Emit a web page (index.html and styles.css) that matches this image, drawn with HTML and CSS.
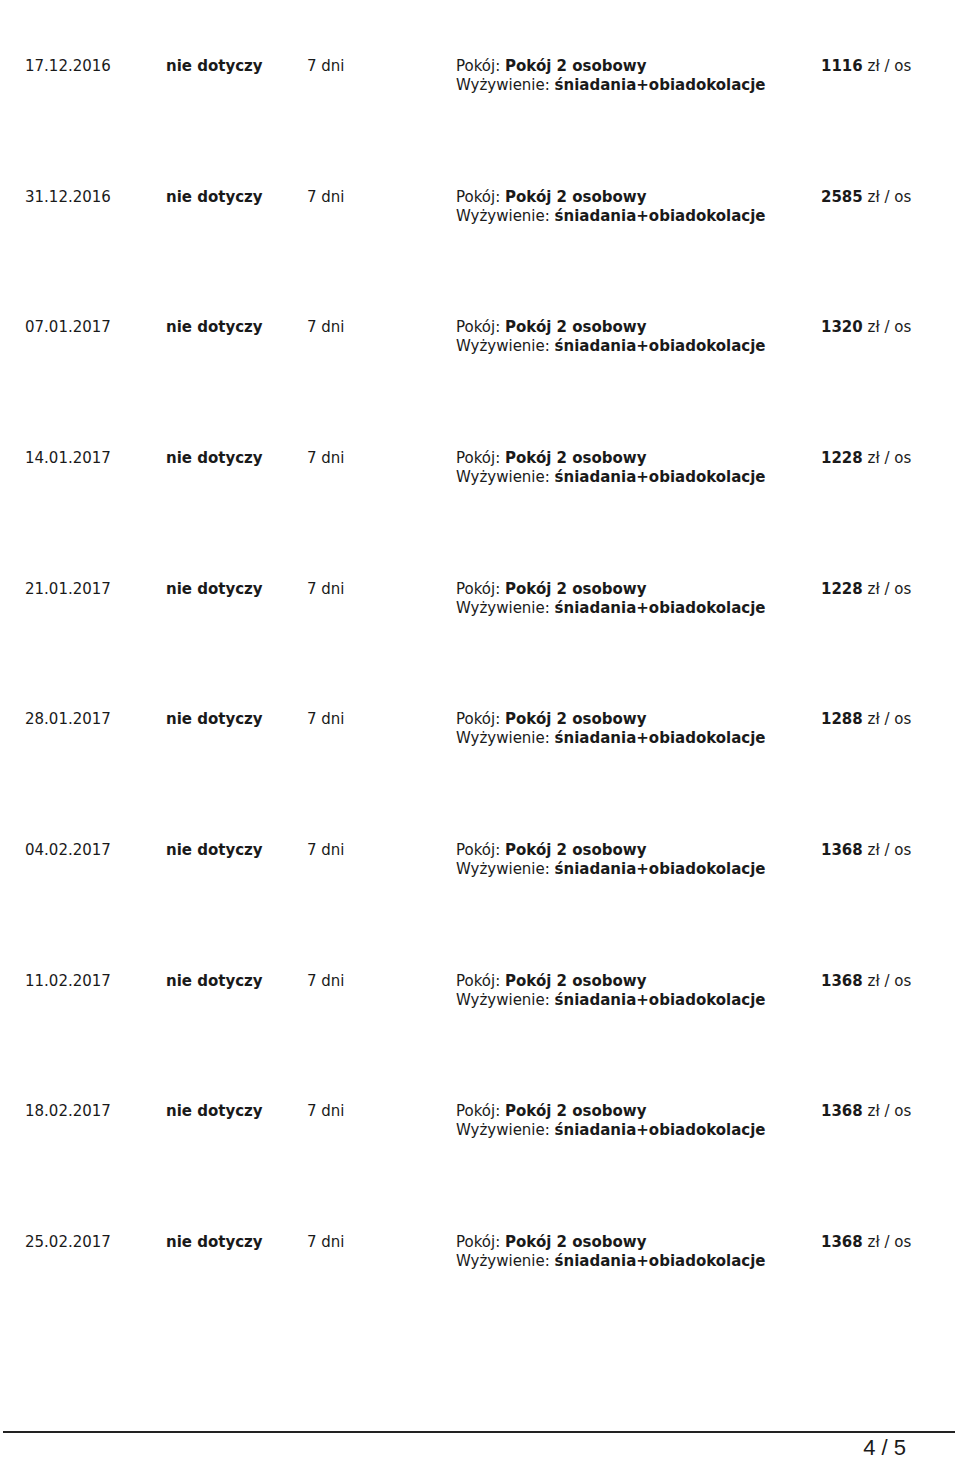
FILE: index.html
```html
<!DOCTYPE html>
<html lang="pl">
<head>
<meta charset="utf-8">
<title>Terminy</title>
<link rel="stylesheet" href="styles.css">
</head>
<body>
<div class="page">
  <div class="rows">
    <div class="row"><div>17.12.2016</div><div class="b">nie dotyczy</div><div>7 dni</div><div>Pokój: <b>Pokój 2 osobowy</b><br>Wyżywienie: <b>śniadania+obiadokolacje</b></div><div><b>1116</b> zł / os</div></div>
    <div class="row"><div>31.12.2016</div><div class="b">nie dotyczy</div><div>7 dni</div><div>Pokój: <b>Pokój 2 osobowy</b><br>Wyżywienie: <b>śniadania+obiadokolacje</b></div><div><b>2585</b> zł / os</div></div>
    <div class="row"><div>07.01.2017</div><div class="b">nie dotyczy</div><div>7 dni</div><div>Pokój: <b>Pokój 2 osobowy</b><br>Wyżywienie: <b>śniadania+obiadokolacje</b></div><div><b>1320</b> zł / os</div></div>
    <div class="row"><div>14.01.2017</div><div class="b">nie dotyczy</div><div>7 dni</div><div>Pokój: <b>Pokój 2 osobowy</b><br>Wyżywienie: <b>śniadania+obiadokolacje</b></div><div><b>1228</b> zł / os</div></div>
    <div class="row"><div>21.01.2017</div><div class="b">nie dotyczy</div><div>7 dni</div><div>Pokój: <b>Pokój 2 osobowy</b><br>Wyżywienie: <b>śniadania+obiadokolacje</b></div><div><b>1228</b> zł / os</div></div>
    <div class="row"><div>28.01.2017</div><div class="b">nie dotyczy</div><div>7 dni</div><div>Pokój: <b>Pokój 2 osobowy</b><br>Wyżywienie: <b>śniadania+obiadokolacje</b></div><div><b>1288</b> zł / os</div></div>
    <div class="row"><div>04.02.2017</div><div class="b">nie dotyczy</div><div>7 dni</div><div>Pokój: <b>Pokój 2 osobowy</b><br>Wyżywienie: <b>śniadania+obiadokolacje</b></div><div><b>1368</b> zł / os</div></div>
    <div class="row"><div>11.02.2017</div><div class="b">nie dotyczy</div><div>7 dni</div><div>Pokój: <b>Pokój 2 osobowy</b><br>Wyżywienie: <b>śniadania+obiadokolacje</b></div><div><b>1368</b> zł / os</div></div>
    <div class="row"><div>18.02.2017</div><div class="b">nie dotyczy</div><div>7 dni</div><div>Pokój: <b>Pokój 2 osobowy</b><br>Wyżywienie: <b>śniadania+obiadokolacje</b></div><div><b>1368</b> zł / os</div></div>
    <div class="row"><div>25.02.2017</div><div class="b">nie dotyczy</div><div>7 dni</div><div>Pokój: <b>Pokój 2 osobowy</b><br>Wyżywienie: <b>śniadania+obiadokolacje</b></div><div><b>1368</b> zł / os</div></div>
  </div>
  <div class="footer">4 / 5</div>
</div>
</body>
</html>
```

FILE: styles.css
```css
html, body {
  margin: 0;
  padding: 0;
  background: #fff;
}
.page {
  width: 960px;
  height: 1458px;
  display: flex;
  flex-direction: column;
  color: #1a1a1a;
  font-family: "DejaVu Sans", sans-serif;
  font-size: 15px;
  line-height: 19px;
}
.rows {
  padding-top: 57px;
  padding-left: 25px;
  display: grid;
  grid-auto-rows: 130.67px;
}
.row {
  display: grid;
  grid-template-columns: 141px 141px 149px 365px auto;
  align-items: start;
}
.b, b {
  font-weight: bold;
}
.footer {
  margin: 67px 5px 0 3px;
  border-top: 2px solid #222;
  padding-top: 2px;
  padding-right: 49px;
  text-align: right;
  font-family: "Liberation Sans", Arial, sans-serif;
  font-size: 22px;
  line-height: 25px;
  color: #1a1a1a;
}
```
